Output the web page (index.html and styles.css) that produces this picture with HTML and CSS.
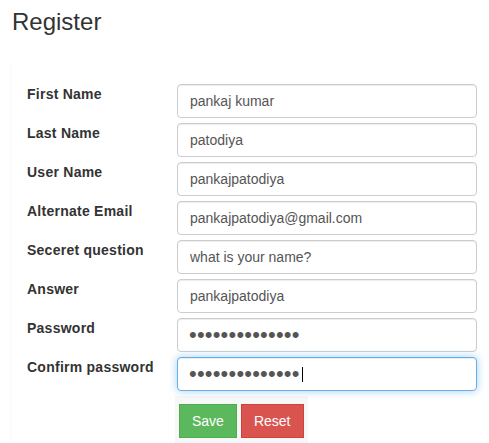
FILE: index.html
```html
<!DOCTYPE html>
<html>
<head>
<meta charset="utf-8">
<link rel="stylesheet" href="styles.css">
</head>
<body>
<h2 class="title">Register</h2>
<form class="panel">
  <div class="row"><label class="lbl">First Name</label><input class="field" type="text" value="pankaj kumar"></div>
  <div class="row"><label class="lbl">Last Name</label><input class="field" type="text" value="patodiya"></div>
  <div class="row"><label class="lbl">User Name</label><input class="field" type="text" value="pankajpatodiya"></div>
  <div class="row"><label class="lbl">Alternate Email</label><input class="field" type="text" value="pankajpatodiya@gmail.com"></div>
  <div class="row"><label class="lbl">Seceret question</label><input class="field" type="text" value="what is your name?"></div>
  <div class="row"><label class="lbl">Answer</label><input class="field" type="text" value="pankajpatodiya"></div>
  <div class="row"><label class="lbl">Password</label><input class="field pw" type="password" value="abcdefghijklmn"></div>
  <div class="row"><label class="lbl">Confirm password</label><div class="wrap"><input class="field pw focused" type="password" value="abcdefghijklmn"><span class="caret"></span></div></div>
  <div class="actions"><div class="btnbox"><button type="button" class="btn save">Save</button><button type="button" class="btn reset">Reset</button></div></div>
</form>
</body>
</html>
```
FILE: styles.css
```css
html, body {
  margin: 0;
  padding: 0;
  background: #fff;
  font-family: "Liberation Sans", Arial, sans-serif;
  overflow: hidden;
}
.title {
  margin: 0;
  padding: 9px 12px 0;
  font-size: 24px;
  line-height: 26px;
  font-weight: normal;
  color: #333;
  height: 55px;
  box-sizing: border-box;
}
.panel {
  margin: 9px 0 0 10px;
  border-left: 1px solid #fafafa;
  padding: 20px 0 0 16px;
  display: flex;
  flex-direction: column;
  gap: 5px;
}
.row {
  display: flex;
  align-items: flex-start;
}
.lbl {
  width: 150px;
  flex: none;
  font-size: 14px;
  line-height: 20px;
  font-weight: bold;
  letter-spacing: 0.25px;
  color: #333;
}
.field {
  width: 300px;
  height: 34px;
  box-sizing: border-box;
  margin: 0;
  padding: 6px 12px;
  font-family: "Liberation Sans", Arial, sans-serif;
  font-size: 14px;
  color: #555;
  background: #fff;
  border: 1px solid #ccc;
  border-radius: 4px;
  box-shadow: inset 0 1px 1px rgba(0,0,0,.075);
  outline: none;
}
.pw {
  font-size: 22px;
  letter-spacing: 0.2px;
  padding-left: 11px;
}
.wrap {
  position: relative;
}
.focused {
  border-color: #66afe9;
  box-shadow: inset 0 1px 1px rgba(0,0,0,.075), 0 0 8px rgba(102,175,233,.6);
}
.caret {
  position: absolute;
  left: 125px;
  top: 10px;
  width: 1px;
  height: 15px;
  background: #000;
}
.actions {
  display: flex;
  padding-left: 148px;
}
.btnbox {
  background: #f7f7f7;
  padding: 8px 4px 8px 4px;
  display: flex;
  gap: 4px;
}
.btn {
  margin: 0;
  height: 34px;
  padding: 6px 12px;
  font-family: "Liberation Sans", Arial, sans-serif;
  font-size: 14px;
  line-height: 20px;
  color: #fff;
  border: 1px solid;
  border-radius: 0;
  cursor: pointer;
}
.save {
  background: #5cb85c;
  border-color: #4cae4c;
}
.reset {
  background: #d9534f;
  border-color: #d43f3a;
}
```
